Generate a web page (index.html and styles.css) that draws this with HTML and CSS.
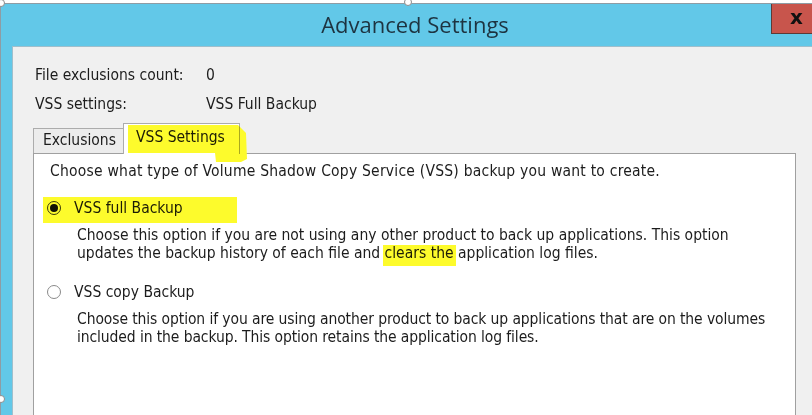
FILE: index.html
```html
<!DOCTYPE html>
<html>
<head>
<meta charset="utf-8">
<link rel="stylesheet" href="styles.css">
</head>
<body>
<div class="page">
  <div class="window">
    <div class="titlebar">
      <div class="title">Advanced Settings</div>
      <div class="close">x</div>
    </div>
    <div class="client">
      <div class="info">
        <div class="row"><span class="label">File exclusions count:</span><span>0</span></div>
        <div class="row"><span class="label">VSS settings:</span><span>VSS Full Backup</span></div>
      </div>
      <div class="tabs">
        <div class="tab">Exclusions</div>
        <div class="tab active">VSS Settings</div>
      </div>
      <div class="panel">
        <p class="intro">Choose what type of Volume Shadow Copy Service (VSS) backup you want to create.</p>
        <div class="option first">
          <span class="radio checked"></span>
          <span class="opt-label">VSS full Backup</span>
        </div>
        <p class="desc">Choose this option if you are not using any other product to back up applications. This option<br>updates the backup history of each file and <span class="hl">clears the</span> application log files.</p>
        <div class="option">
          <span class="radio"></span>
          <span class="opt-label">VSS copy Backup</span>
        </div>
        <p class="desc tight">Choose this option if you are using another product to back up applications that are on the volumes<br>included in the backup. This option retains the application log files.</p>
      </div>
    </div>
  </div>
  <span class="handle h-tl"></span>
  <span class="handle h-tc"></span>
  <span class="handle h-ml"></span>
</div>
</body>
</html>
```

FILE: styles.css
```css
html, body {
  margin: 0;
  padding: 0;
  background: #ffffff;
}

.page {
  position: relative;
  width: 812px;
  height: 415px;
  overflow: hidden;
  padding-top: 3px;
  box-sizing: border-box;
  font-family: "DejaVu Sans Condensed", "Liberation Sans", Arial, sans-serif;
  font-size: 15.5px;
  color: #1c1c1c;
}

.window {
  height: 412px;
  background: #62c8e8;
  border-top: 1px solid #8e9ca4;
  border-left: 1px solid #8e9ca4;
  padding-left: 11px;
  display: flex;
  flex-direction: column;
}

.titlebar {
  height: 42px;
  margin-left: -11px;
  display: flex;
  align-items: flex-start;
}

.title {
  flex: 1;
  padding-left: 58px;
  text-align: center;
  font-family: "Open Sans", "Noto Sans", sans-serif;
  font-size: 22px;
  line-height: 40px;
  color: #1d3340;
}

.close {
  flex: none;
  width: 41px;
  height: 30px;
  box-sizing: border-box;
  padding-left: 9px;
  text-align: center;
  background: #c8554c;
  border-left: 1px solid #5e3a36;
  border-bottom: 1px solid #5e3a36;
  font-family: "DejaVu Sans", sans-serif;
  font-weight: bold;
  font-size: 20px;
  line-height: 26px;
  color: #111111;
}

.client {
  flex: 1;
  background: #f0f0f0;
  border-top: 1px solid #9fbfcc;
  border-left: 1px solid #9fbfcc;
  display: flex;
  flex-direction: column;
}

.info {
  padding: 18px 0 0 22px;
  display: flex;
  flex-direction: column;
  gap: 9px;
}

.row {
  display: flex;
  line-height: 20px;
  height: 20px;
}

.label {
  width: 171px;
}

.tabs {
  margin-top: 9px;
  padding-left: 20px;
  height: 30px;
  display: flex;
  align-items: flex-end;
}

.tab {
  box-sizing: border-box;
  height: 25px;
  width: 91px;
  padding: 1px 0 0 9px;
  line-height: 20px;
  background: #ececec;
  border: 1px solid #acacac;
  border-bottom: none;
}

.tab.active {
  position: relative;
  z-index: 2;
  width: 117px;
  height: 31px;
  margin-left: -1px;
  margin-bottom: -1px;
  padding: 3px 0 0 12px;
  background: #ffffff;
}

.tab.active::after {
  content: "";
  position: absolute;
  left: 4px;
  top: 1px;
  width: 124px;
  height: 38px;
  background: #fdfb2c;
  mix-blend-mode: multiply;
  clip-path: polygon(0 0, 110px 0, 118px 8px, 119px 34px, 113px 37px, 88px 37px, 87px 28px, 0 28px);
}

.panel {
  flex: 1;
  margin-left: 20px;
  width: 763px;
  box-sizing: border-box;
  background: #ffffff;
  border: 1px solid #a0a0a0;
  padding: 7px 0 0 16px;
}

.intro {
  margin: 0;
  line-height: 20px;
  letter-spacing: 0.22px;
}

.option {
  position: relative;
  display: flex;
  align-items: center;
  height: 20px;
  margin-left: -3px;
  line-height: 20px;
  margin-top: 20px;
}

.option.first {
  margin-top: 17px;
}

.option.first::after {
  content: "";
  position: absolute;
  left: -4px;
  top: -1px;
  width: 194px;
  height: 26px;
  background: #fdfb2c;
  mix-blend-mode: multiply;
}

.radio {
  flex: none;
  width: 14px;
  height: 14px;
  box-sizing: border-box;
  border-radius: 50%;
  border: 1px solid #8a8a8a;
  background: #ffffff;
  margin-right: 13px;
  display: flex;
  align-items: center;
  justify-content: center;
}

.radio.checked {
  border-color: #3a3a3a;
}

.radio.checked::before {
  content: "";
  width: 8px;
  height: 8px;
  border-radius: 50%;
  background: #111111;
}

.desc {
  margin: 8px 0 0 27px;
  line-height: 18px;
  white-space: nowrap;
}

.desc.tight {
  letter-spacing: -0.1px;
}

.hl {
  position: relative;
}

.hl::after {
  content: "";
  position: absolute;
  left: -2px;
  right: -2px;
  top: 1px;
  bottom: -4px;
  background: #fdfb2c;
  mix-blend-mode: multiply;
}

.handle {
  position: absolute;
  width: 8px;
  height: 8px;
  box-sizing: border-box;
  border-radius: 50%;
  background: #ffffff;
  border: 1px solid #8c8c8c;
}

.h-tl { left: -3px; top: -1px; }
.h-tc { left: 404px; top: -2px; }
.h-ml { left: -3px; top: 395px; }
```
